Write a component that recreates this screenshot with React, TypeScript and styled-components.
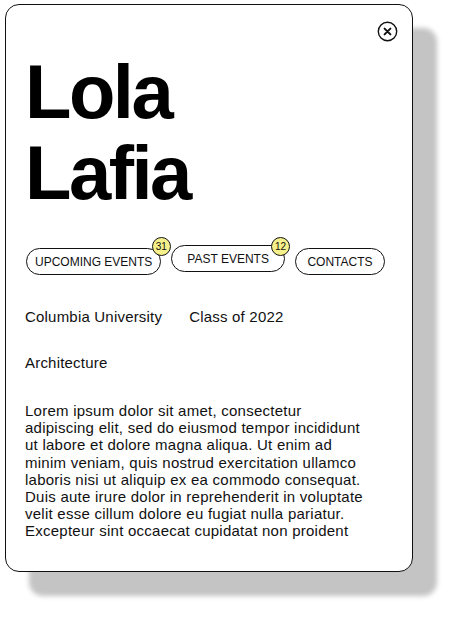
import React from "react";
import styled, { createGlobalStyle } from "styled-components";

const Global = createGlobalStyle`
  html, body { margin: 0; padding: 0; background: #ffffff; }
  body { font-family: "Liberation Sans", Arial, sans-serif; color: #111; }
`;

const Page = styled.div`
  width: 464px;
  height: 618px;
  padding: 4px 0 0 5px;
  box-sizing: border-box;
`;

const Card = styled.div`
  width: 408px;
  height: 568px;
  box-sizing: border-box;
  border: 1.5px solid #111;
  border-radius: 14px;
  background: #fff;
  box-shadow: 24px 24px 5px #c4c4c4;
  padding: 16px 14px 0 19px;
  display: flex;
  flex-direction: column;
`;

const TopBar = styled.div`
  display: flex;
  justify-content: flex-end;
  height: 22px;
`;

const CloseButton = styled.button`
  width: 21px;
  height: 21px;
  padding: 0;
  border: none;
  background: none;
  display: flex;
  align-items: center;
  justify-content: center;
  cursor: pointer;
`;

const Title = styled.h1`
  margin: 8px 0 0 0;
  font-family: "Liberation Sans", Arial, sans-serif;
  font-weight: 700;
  font-size: 76px;
  line-height: 81px;
  letter-spacing: -2.5px;
  color: #000;
`;

const Tags = styled.div`
  display: flex;
  align-items: flex-start;
  gap: 10px;
  margin-top: 34px;
  padding-left: 1px;
`;

const Pill = styled.div<{ $pad: number; $shift: number }>`
  position: relative;
  height: 27px;
  box-sizing: border-box;
  border: 1.5px solid #111;
  border-radius: 14px;
  padding: 0 ${(p) => p.$pad}px;
  display: flex;
  align-items: center;
  font-size: 12px;
  color: #111;
  white-space: nowrap;
  transform: translateY(${(p) => p.$shift}px);
  background: #fff;
`;

const Badge = styled.span<{ $right: number; $top: number }>`
  position: absolute;
  right: ${(p) => p.$right}px;
  top: ${(p) => p.$top}px;
  width: 19px;
  height: 19px;
  box-sizing: border-box;
  border-radius: 50%;
  border: 1px solid #111;
  background: #f6f08a;
  font-size: 10px;
  display: flex;
  align-items: center;
  justify-content: center;
  color: #111;
`;

const InfoRow = styled.div`
  display: flex;
  gap: 27px;
  margin-top: 34px;
  font-size: 15px;
  line-height: 18px;
  letter-spacing: 0.2px;
`;

const Field = styled.div`
  font-size: 15px;
  line-height: 18px;
  letter-spacing: 0.2px;
  margin-top: 28px;
`;

const Paragraph = styled.p`
  margin: 30px 0 0 0;
  font-size: 15px;
  line-height: 17.2px;
  letter-spacing: 0.25px;
  color: #111;
  white-space: nowrap;
`;

const lines = [
  "Lorem ipsum dolor sit amet, consectetur",
  "adipiscing elit, sed do eiusmod tempor incididunt",
  "ut labore et dolore magna aliqua. Ut enim ad",
  "minim veniam, quis nostrud exercitation ullamco",
  "laboris nisi ut aliquip ex ea commodo consequat.",
  "Duis aute irure dolor in reprehenderit in voluptate",
  "velit esse cillum dolore eu fugiat nulla pariatur.",
  "Excepteur sint occaecat cupidatat non proident",
];

export default function App() {
  return (
    <>
      <Global />
      <Page>
        <Card>
          <TopBar>
            <CloseButton aria-label="Close">
              <svg width="21" height="21" viewBox="0 0 21 21">
                <circle cx="10.5" cy="10.5" r="9.2" fill="none" stroke="#111" strokeWidth="1.4" />
                <path d="M7.6 7.6 L13.4 13.4 M13.4 7.6 L7.6 13.4" stroke="#111" strokeWidth="2" strokeLinecap="round" />
              </svg>
            </CloseButton>
          </TopBar>
          <Title>
            Lola
            <br />
            Lafia
          </Title>
          <Tags>
            <Pill $pad={8} $shift={1}>
              UPCOMING EVENTS
              <Badge $right={-10.5} $top={-12}>31</Badge>
            </Pill>
            <Pill $pad={15} $shift={-2}>
              PAST EVENTS
              <Badge $right={-6} $top={-9}>12</Badge>
            </Pill>
            <Pill $pad={11.5} $shift={1}>CONTACTS</Pill>
          </Tags>
          <InfoRow>
            <span>Columbia University</span>
            <span>Class of 2022</span>
          </InfoRow>
          <Field>Architecture</Field>
          <Paragraph>
            {lines.map((l, i) => (
              <React.Fragment key={i}>
                {l}
                {i < lines.length - 1 && <br />}
              </React.Fragment>
            ))}
          </Paragraph>
        </Card>
      </Page>
    </>
  );
}
